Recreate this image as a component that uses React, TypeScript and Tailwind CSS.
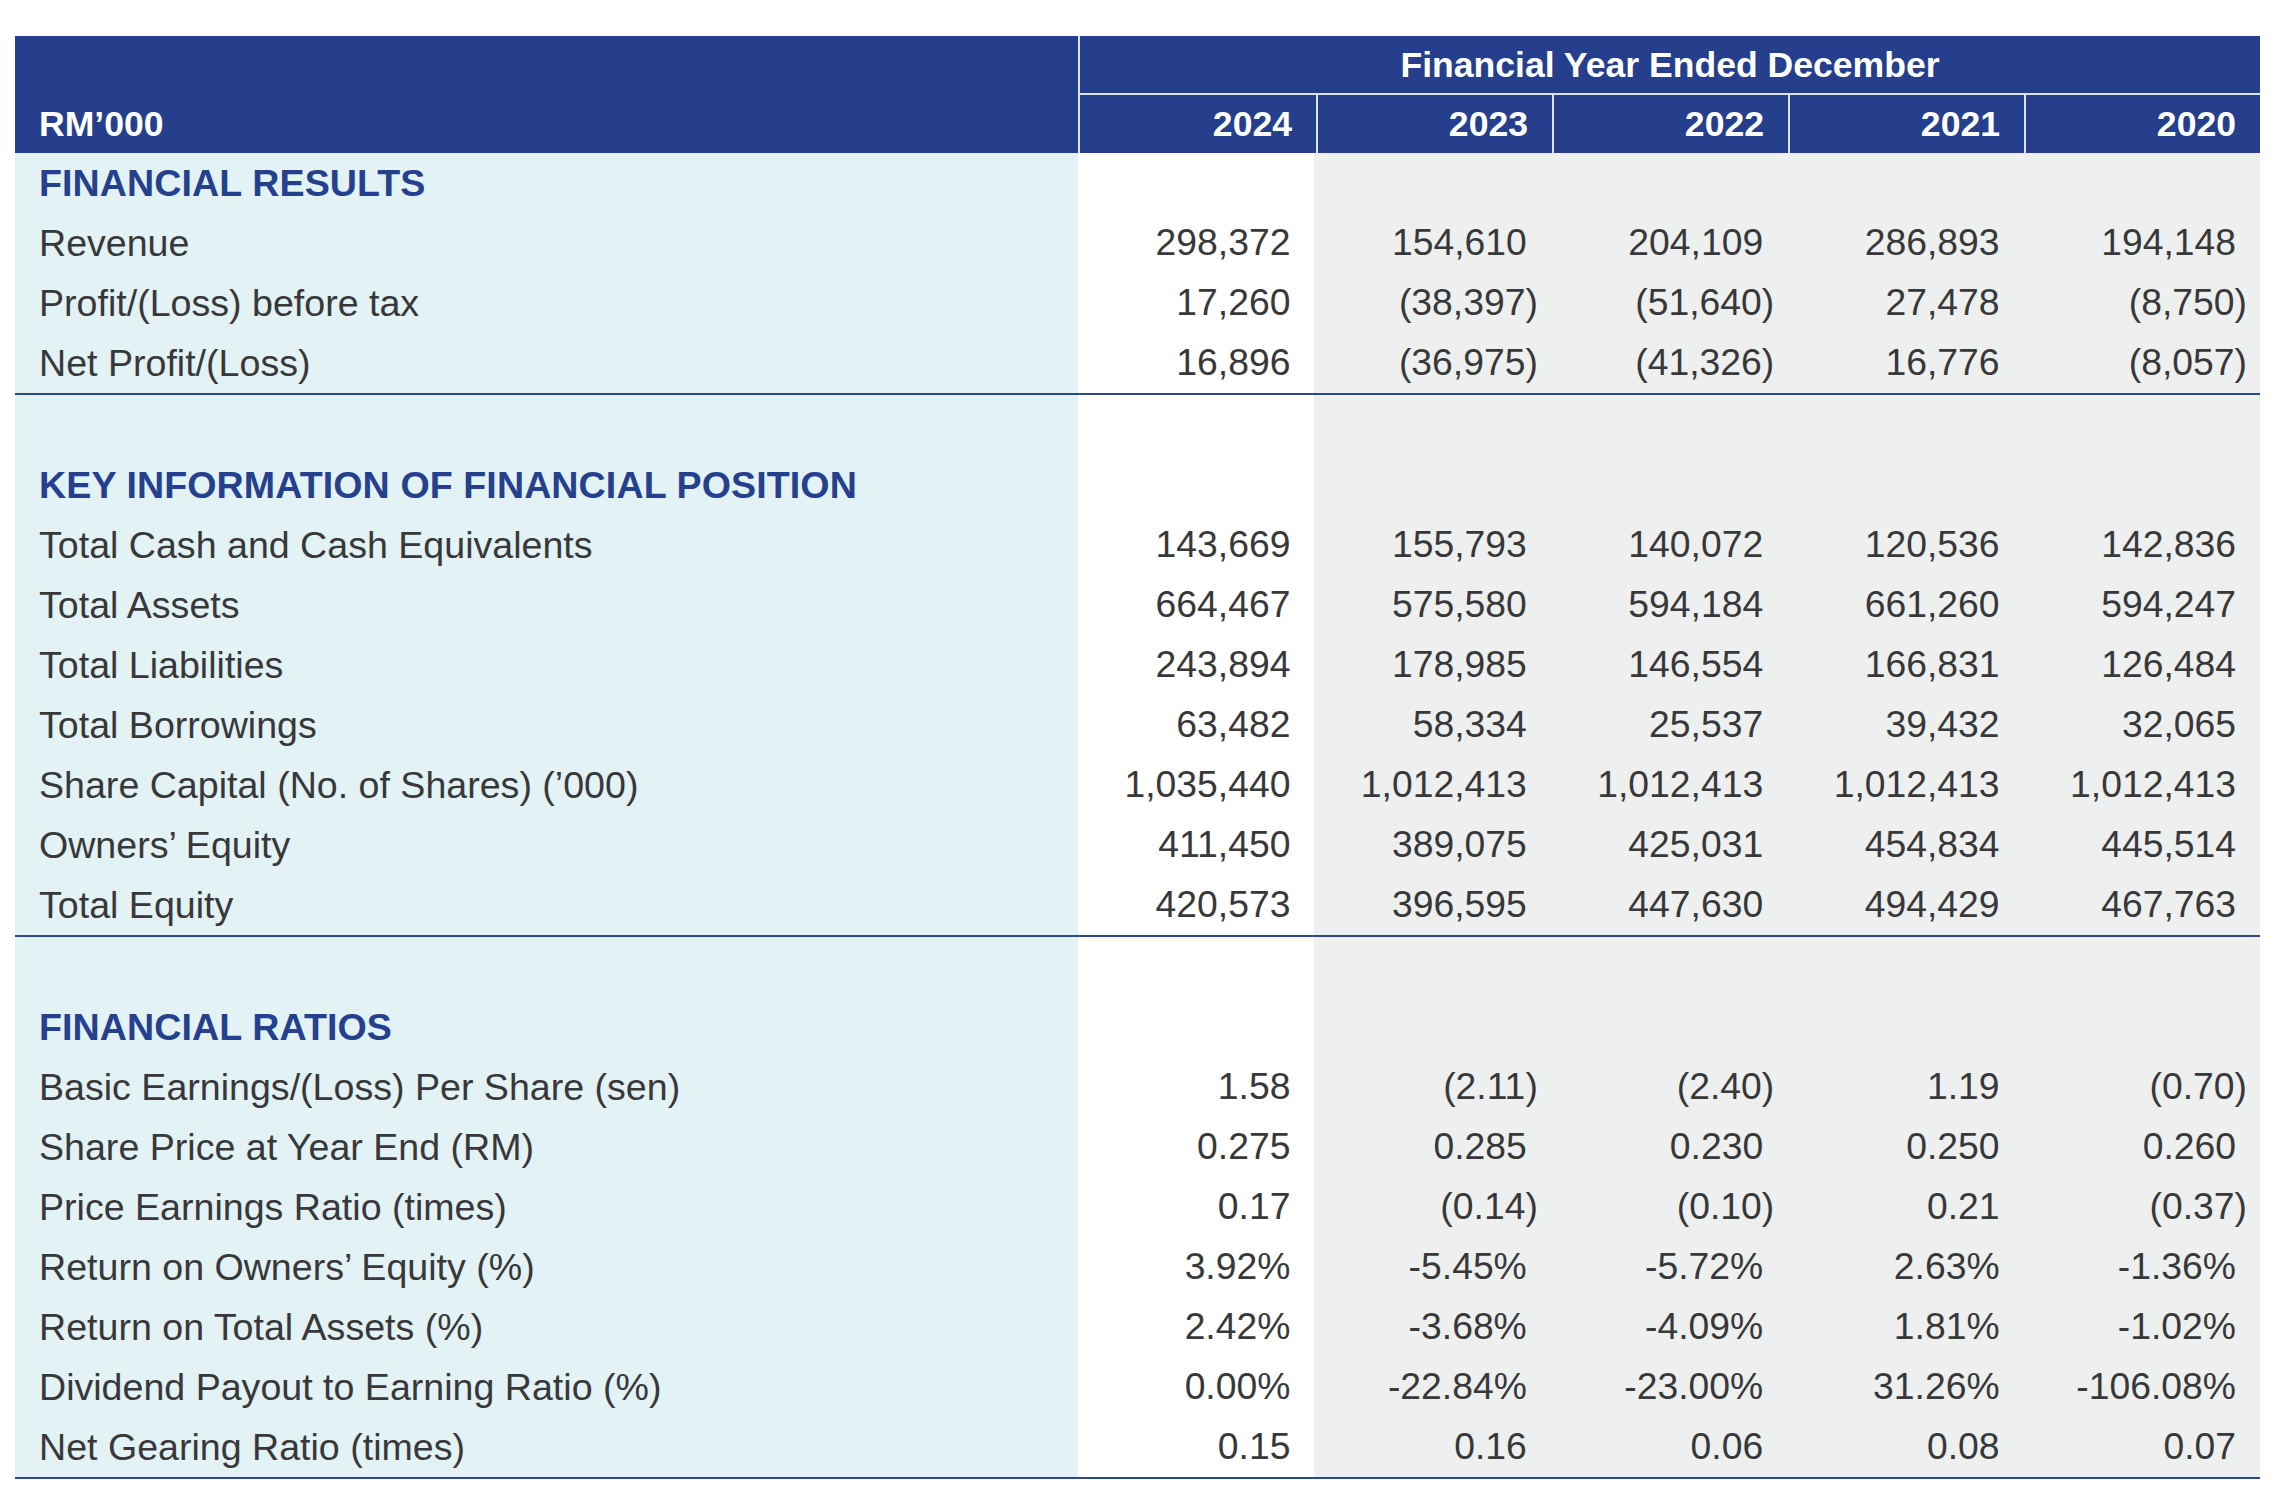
import React from "react";

type Row = { label: string; values: string[] };
type Section = { title: string; rows: Row[]; leadingBlank: boolean };

const sections: Section[] = [
  {
    title: "FINANCIAL RESULTS",
    leadingBlank: false,
    rows: [
      { label: "Revenue", values: ["298,372", "154,610", "204,109", "286,893", "194,148"] },
      { label: "Profit/(Loss) before tax", values: ["17,260", "(38,397)", "(51,640)", "27,478", "(8,750)"] },
      { label: "Net Profit/(Loss)", values: ["16,896", "(36,975)", "(41,326)", "16,776", "(8,057)"] },
    ],
  },
  {
    title: "KEY INFORMATION OF FINANCIAL POSITION",
    leadingBlank: true,
    rows: [
      { label: "Total Cash and Cash Equivalents", values: ["143,669", "155,793", "140,072", "120,536", "142,836"] },
      { label: "Total Assets", values: ["664,467", "575,580", "594,184", "661,260", "594,247"] },
      { label: "Total Liabilities", values: ["243,894", "178,985", "146,554", "166,831", "126,484"] },
      { label: "Total Borrowings", values: ["63,482", "58,334", "25,537", "39,432", "32,065"] },
      { label: "Share Capital (No. of Shares) (\u2019000)", values: ["1,035,440", "1,012,413", "1,012,413", "1,012,413", "1,012,413"] },
      { label: "Owners\u2019 Equity", values: ["411,450", "389,075", "425,031", "454,834", "445,514"] },
      { label: "Total Equity", values: ["420,573", "396,595", "447,630", "494,429", "467,763"] },
    ],
  },
  {
    title: "FINANCIAL RATIOS",
    leadingBlank: true,
    rows: [
      { label: "Basic Earnings/(Loss) Per Share (sen)", values: ["1.58", "(2.11)", "(2.40)", "1.19", "(0.70)"] },
      { label: "Share Price at Year End (RM)", values: ["0.275", "0.285", "0.230", "0.250", "0.260"] },
      { label: "Price Earnings Ratio (times)", values: ["0.17", "(0.14)", "(0.10)", "0.21", "(0.37)"] },
      { label: "Return on Owners\u2019 Equity (%)", values: ["3.92%", "-5.45%", "-5.72%", "2.63%", "-1.36%"] },
      { label: "Return on Total Assets (%)", values: ["2.42%", "-3.68%", "-4.09%", "1.81%", "-1.02%"] },
      { label: "Dividend Payout to Earning Ratio (%)", values: ["0.00%", "-22.84%", "-23.00%", "31.26%", "-106.08%"] },
      { label: "Net Gearing Ratio (times)", values: ["0.15", "0.16", "0.06", "0.08", "0.07"] },
    ],
  },
];

const years = ["2024", "2023", "2022", "2021", "2020"];

function Value({ v }: { v: string }) {
  if (v.endsWith(")")) {
    return (
      <span>
        {v.slice(0, -1)}
        <span className="mr-[-11px]">)</span>
      </span>
    );
  }
  return <span>{v}</span>;
}

function DataRow({
  label,
  values,
  isTitle,
  last,
}: {
  label?: string;
  values?: string[];
  isTitle?: boolean;
  last?: boolean;
}) {
  const border = last ? "border-b-[2px] border-[#2b4790]" : "";
  return (
    <div className={`grid grid-cols-[1063px_repeat(5,1fr)] ${border}`}>
      <div
        className={`h-[60px] bg-[#e2f2f5] flex items-center pl-[24px] text-[37.6px] ${
          isTitle ? "text-[#24408e] font-bold tracking-[0.1px]" : "text-[#38383a]"
        }`}
      >
        {label}
      </div>
      {[0, 1, 2, 3, 4].map((i) => (
        <div
          key={i}
          className={`h-[60px] flex items-center justify-end pr-[24px] text-[37.3px] text-[#38383a] ${
            i === 0 ? "bg-white" : "bg-[#eef0f0]"
          }`}
        >
          {values ? <Value v={values[i]} /> : null}
        </div>
      ))}
    </div>
  );
}

export default function App() {
  return (
    <div
      className="w-[2280px] h-[1500px] bg-white pt-[36px] pl-[15px]"
      style={{ fontFamily: '"Liberation Sans", Arial, sans-serif' }}
    >
      <div className="w-[2245px]">
        {/* Header */}
        <div className="flex bg-[#253f8c] text-white font-bold text-[35.6px] h-[117px]">
          <div className="w-[1063px] flex flex-col">
            <div className="h-[59px]" />
            <div className="flex-1 flex items-center pl-[24px] pt-[2px]">RM&rsquo;000</div>
          </div>
          <div className="flex-1 flex flex-col border-l-[2px] border-[#dde3f2]">
            <div className="h-[59px] flex items-center justify-center pt-[2px] border-b-[2px] border-[#dde3f2]">
              Financial Year Ended December
            </div>
            <div className="flex-1 grid grid-cols-5">
              {years.map((y, i) => (
                <div
                  key={y}
                  className={`flex items-center justify-end pr-[24px] pt-[2px] ${
                    i > 0 ? "border-l-[2px] border-[#dde3f2]" : ""
                  }`}
                >
                  {y}
                </div>
              ))}
            </div>
          </div>
        </div>

        {/* Body */}
        {sections.map((s) => (
          <div key={s.title}>
            {s.leadingBlank && <DataRow />}
            <DataRow label={s.title} isTitle />
            {s.rows.map((r, idx) => (
              <DataRow
                key={r.label}
                label={r.label}
                values={r.values}
                last={idx === s.rows.length - 1}
              />
            ))}
          </div>
        ))}
      </div>
    </div>
  );
}
